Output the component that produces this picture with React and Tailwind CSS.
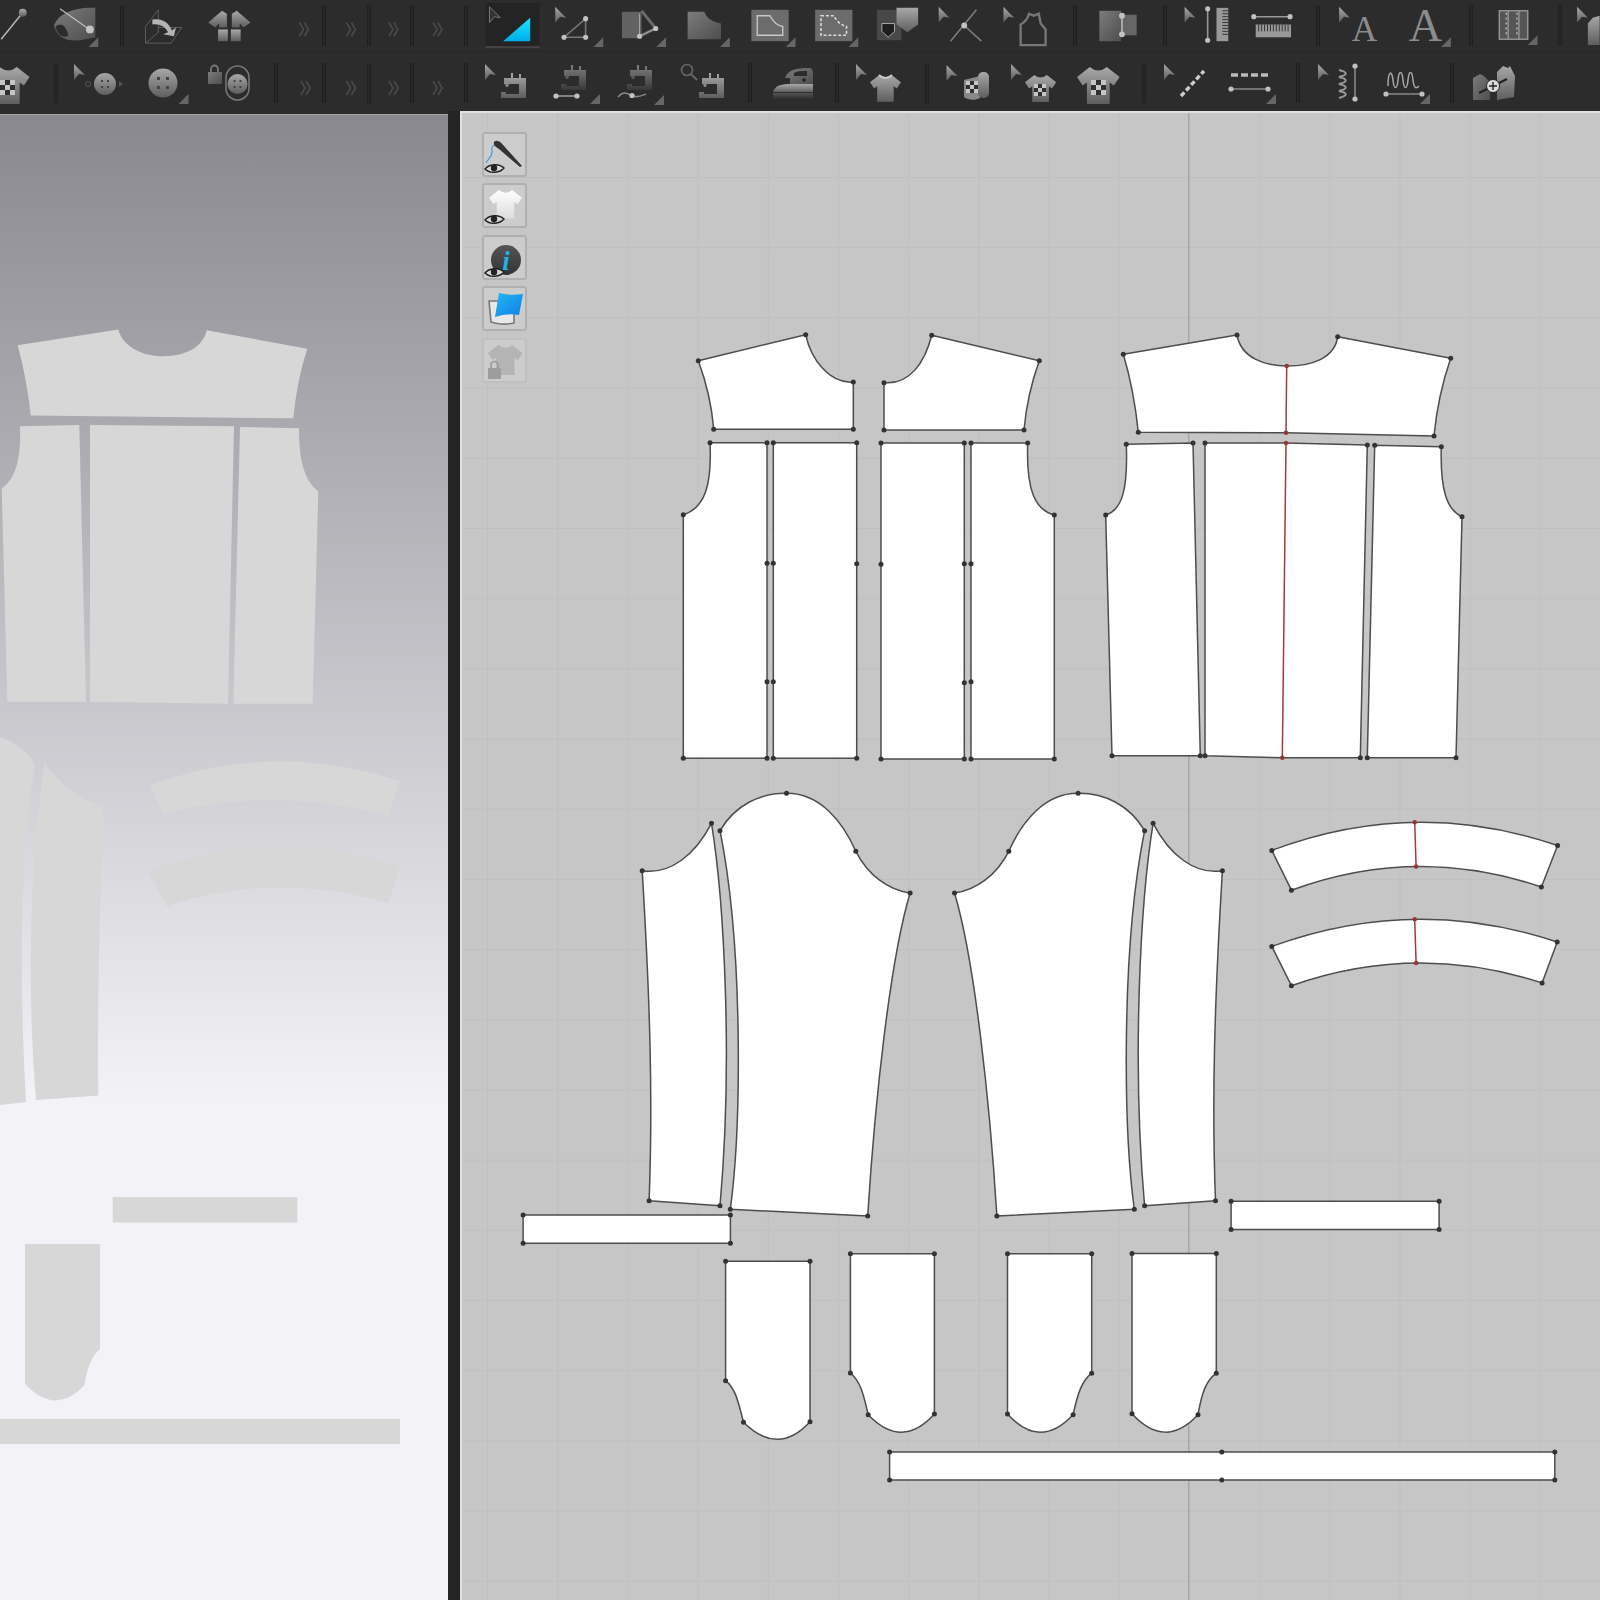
import React from 'react';

// Shared toolbar bits, all drawn in page coordinates so the viewBox of each group lines up
const Arrow = ({ x, y, outline }) => (
  <polygon
    points={`${x - 5},${y - 8} ${x + 6},${y + 3} ${x},${y + 2} ${x - 5},${y + 8}`}
    fill={outline ? '#333' : 'url(#metal)'}
    stroke={outline ? '#777' : 'none'}
  />
);
const Corner = ({ x, y }) => <polygon points={`${x + 5},${y - 5} ${x + 5},${y + 5} ${x - 5},${y + 5}`} fill="#666" />;
const Node = ({ x, y, r = 2.6 }) => <circle cx={x} cy={y} r={r} fill="#c2c2c2" />;
const Chevrons = ({ x, y }) => (
  <path d={`M${x - 5} ${y - 7}L${x - 1} ${y}L${x - 5} ${y + 7}M${x} ${y - 7}L${x + 4} ${y}L${x} ${y + 7}`} fill="none" stroke="#484848" strokeWidth="1.8" />
);
const Machine = ({ x, y, fill = 'url(#metal)' }) => (
  <path transform={`translate(${x} ${y})`} fill={fill} d="M3 6H10V1H12V6H18V2H20V6H25V26H0V20H5V22H18V12H8L7 15H5L4 12H3Z" />
);
const Shirt = ({ x, y, s = 1, fill = 'url(#metal)' }) => (
  <path transform={`translate(${x} ${y}) scale(${s})`} fill={fill} d="M9 0Q15 5 21 0L30 7L26 13L23 11V26H7V11L4 13L0 7Z" />
);
const Checks = ({ x, y, c = 4 }) => (
  <g>
    {[0, 1, 2].map((row) =>
      [0, 1, 2].map((col) => (
        <rect key={`${row}-${col}`} x={x + col * c} y={y + row * c} width={c} height={c} fill={(row + col) % 2 ? '#303030' : '#c6c6c6'} />
      ))
    )}
  </g>
);

const Group = ({ className, box, children }) => (
  <svg className={`shrink-0 h-full ${className}`} viewBox={box}>
    {children}
  </svg>
);
const SepTop = () => <div className="shrink-0 w-[4px] h-[41px] mt-[5px] border-x border-[#1f1f1f] bg-[#272727]" />;
const SepBottom = () => <div className="shrink-0 w-[4px] h-[40px] mt-[11px] border-x border-[#1f1f1f] bg-[#272727]" />;

const TopRow = () => (
  <div className="flex h-[52px] border-b border-[#262626]">
    <Group className="w-[120px]" box="0 0 120 52">
      <line x1="0" y1="40" x2="21" y2="14" stroke="#bbb" strokeWidth="1.4" />
      <circle cx="22" cy="13" r="4" fill="url(#metal)" />
      <path d="M54 26C58 14 74 7 96 8L96 38C78 42 60 46 54 26Z" fill="url(#metalDark)" />
      <path d="M55 27C57 38 66 40 69 36C66 26 62 22 55 27Z" fill="#2c2c2c" stroke="#666" strokeWidth="0.8" />
      <line x1="60" y1="9" x2="90" y2="30" stroke="#bbb" strokeWidth="1.3" />
      <circle cx="90.5" cy="30" r="4" fill="#c4c4c4" />
      <Corner x={94} y={43} />
    </Group>
    <SepTop />
    <Group className="w-[198px]" box="124 0 198 52">
      <path d="M144 27L157 10V33L144 44H170L181 28H157M144 27V44" fill="none" stroke="#5e5e5e" strokeWidth="1" />
      <path d="M151 20C162 18 168 24 171 31L175 28L173 37L162 35L167 33C164 27 158 24 151 25Z" fill="#b4b4b4" />
      <path d="M222 11L208 23L215 28L219 24V28H227V14Z" fill="url(#metal)" />
      <path d="M237 11L251 23L244 28L240 24V28H232V14Z" fill="url(#metal)" />
      <rect x="218" y="30" width="10" height="12" fill="url(#metal)" />
      <rect x="231" y="30" width="10" height="12" fill="url(#metal)" />
      <Chevrons x={306} y={30} />
    </Group>
    <SepTop />
    <Group className="w-[41px]" box="326 0 41 52"><Chevrons x={351.5} y={30} /></Group>
    <SepTop />
    <Group className="w-[39px]" box="371 0 39 52"><Chevrons x={394} y={30} /></Group>
    <SepTop />
    <Group className="w-[50px]" box="414 0 50 52"><Chevrons x={438} y={30} /></Group>
    <SepTop />
    <Group className="w-[605px]" box="468 0 605 52">
      {/* active tool */}
      <rect x="480" y="3" width="55" height="45" fill="#242424" />
      <rect x="480" y="47" width="55" height="2" fill="#444" />
      <Arrow x={489} y={15} outline />
      <defs>
        <linearGradient id="cyan" x1="0" y1="0" x2="0" y2="1">
          <stop offset="0" stopColor="#1fe3ff" />
          <stop offset="1" stopColor="#00aee8" />
        </linearGradient>
      </defs>
      <polygon points="525.5,18 525.5,42 498,42" fill="url(#cyan)" />

      <Arrow x={556} y={15} />
      <path d="M560 38H582V19Z" fill="none" stroke="#777" strokeWidth="1.6" />
      <Node x={560} y={38} />
      <Node x={582} y={38} />
      <Node x={582} y={19} />
      <Corner x={595} y={43} />

      <rect x="619" y="12" width="20" height="27" fill="#626262" />
      <path d="M637 37L653.5 29L639 11" fill="none" stroke="#6a6a6a" strokeWidth="3" />
      <path d="M637 37V14M637 37L653.5 29" fill="none" stroke="#aaa" strokeWidth="1" />
      <Node x={637} y={37} />
      <Node x={653.5} y={29} />
      <Corner x={659} y={43} />

      <path d="M686 12H703C706 20 712 22 720 24V40H686Z" fill="url(#metalDark)" />
      <Corner x={724} y={43} />

      <rect x="751" y="10" width="38" height="32" fill="#6c6c6c" />
      <path d="M757 16H770C773 22 778 26 783 27V36H757Z" fill="none" stroke="#c8c8c8" strokeWidth="1.4" />
      <Corner x={791} y={43} />

      <rect x="816" y="10" width="38" height="32" fill="#6c6c6c" />
      <path d="M822 16H835C838 22 843 26 848 27V36H822Z" fill="none" stroke="#ddd" strokeWidth="1.6" strokeDasharray="3 2" />
      <Corner x={855} y={43} />

      <rect x="879" y="10" width="25" height="31" fill="#484848" />
      <path d="M884 24H897V32L890.5 38L884 32Z" fill="#1e1e1e" stroke="#aaa" strokeWidth="1" />
      <path d="M899 8H921V25L910 33L899 25Z" fill="url(#metal)" />

      <Arrow x={947} y={15} />
      <path d="M980.5 10L954 42M968 26L985.5 42" stroke="#7c7c7c" strokeWidth="1.6" fill="none" />
      <Node x={968} y={26} r={3} />

      <Arrow x={1013} y={15} />
      <path d="M1025.5 46V25C1031 22 1033 18 1034 14L1039 16L1044 14L1046 24L1051 30V46Z" fill="none" stroke="#777" strokeWidth="2.4" />
    </Group>
    <SepTop />
    <Group className="w-[86px]" box="1077 0 86 52">
      <rect x="1121" y="15" width="16" height="21" fill="#666" />
      <rect x="1099" y="11" width="22" height="31" fill="url(#metalDark)" />
      <line x1="1122" y1="16" x2="1122" y2="35" stroke="#bbb" strokeWidth="1.6" />
      <Node x={1122} y={16} r={3} />
      <Node x={1122} y={35} r={3} />
    </Group>
    <SepTop />
    <Group className="w-[149px]" box="1167 0 149 52">
      <Arrow x={1188.5} y={15} />
      <line x1="1207" y1="9" x2="1207" y2="41" stroke="#999" strokeWidth="1.6" />
      <Node x={1207} y={9} />
      <Node x={1207} y={41} />
      <rect x="1216" y="8" width="12" height="34" fill="#999" />
      <path d="M1222 11H1228M1222 14H1228M1222 17H1228M1222 20H1228M1222 23H1228M1222 26H1228M1222 29H1228M1222 32H1228M1222 35H1228" stroke="#333" strokeWidth="1" />
      <line x1="1254" y1="17" x2="1291" y2="17" stroke="#999" strokeWidth="1.6" />
      <Node x={1254} y={17} />
      <Node x={1291} y={17} />
      <rect x="1256" y="25" width="36" height="13" fill="#999" />
      <path d="M1259 25V32M1262 25V32M1265 25V32M1268 25V32M1271 25V32M1274 25V32M1277 25V32M1280 25V32M1283 25V32M1286 25V32M1289 25V32" stroke="#333" strokeWidth="1" />
    </Group>
    <SepTop />
    <Group className="w-[149px]" box="1320 0 149 52">
      <Arrow x={1343} y={15} />
      <text x="1364" y="42" textAnchor="middle" fontSize="36" fill="#8c8c8c" className="font-['Liberation_Serif',serif]">A</text>
      <text x="1426" y="42" textAnchor="middle" fontSize="47" fill="#8c8c8c" className="font-['Liberation_Serif',serif]">A</text>
      <Corner x={1447} y={43} />
    </Group>
    <SepTop />
    <Group className="w-[85px]" box="1473 0 85 52">
      <rect x="1499" y="11" width="29" height="29" fill="#555" stroke="#999" strokeWidth="1.4" />
      <path d="M1508 11V40M1519 11V40" stroke="#999" strokeWidth="1.4" />
      <path d="M1506 13V38M1517 13V38" stroke="#ccc" strokeWidth="1.2" strokeDasharray="2 3" />
      <Corner x={1533} y={41} />
    </Group>
    <SepTop />
    <Group className="w-[38px]" box="1562 0 38 52">
      <Arrow x={1582} y={15} />
      <path d="M1588 46V24L1593 18L1600 16V46Z" fill="url(#metal)" />
    </Group>
  </div>
);

const BottomRow = () => (
  <div className="flex h-[59px]">
    <Group className="w-[54px]" box="0 52 54 59">
      <Shirt x={-13} y={67} s={1.42} />
      <Checks x={0} y={80} c={5} />
    </Group>
    <SepBottom />
    <Group className="w-[216px]" box="58 52 216 59">
      <Arrow x={79} y={72} />
      <circle cx="88" cy="84" r="2.5" fill="none" stroke="#555" />
      <path d="M119 81L123 84L119 87Z" fill="#555" />
      <circle cx="105" cy="84" r="11" fill="url(#metal)" />
      <path d="M101 80h2v2h-2zM107 80h2v2h-2zM101 86h2v2h-2zM107 86h2v2h-2z" fill="#444" />
      <circle cx="163" cy="83" r="14.5" fill="url(#metal)" />
      <path d="M157 77h3v3h-3zM166 77h3v3h-3zM157 86h3v3h-3zM166 86h3v3h-3z" fill="#444" />
      <Corner x={183.5} y={99} />
      <path d="M211 72V69a3.5 3.5 0 0 1 7 0V72" fill="none" stroke="#777" strokeWidth="1.8" />
      <rect x="208" y="72" width="14" height="12" fill="url(#metalDark)" />
      <rect x="226" y="66" width="23" height="34" rx="11.5" fill="none" stroke="#777" strokeWidth="1.6" />
      <circle cx="237.5" cy="84" r="10" fill="url(#metal)" />
      <path d="M233.5 80h2v2h-2zM239.5 80h2v2h-2zM233.5 86h2v2h-2zM239.5 86h2v2h-2z" fill="#444" />
    </Group>
    <SepBottom />
    <Group className="w-[44px]" box="278 52 44 59"><Chevrons x={306} y={88} /></Group>
    <SepBottom />
    <Group className="w-[41px]" box="326 52 41 59"><Chevrons x={351.5} y={88} /></Group>
    <SepBottom />
    <Group className="w-[39px]" box="371 52 39 59"><Chevrons x={394} y={88} /></Group>
    <SepBottom />
    <Group className="w-[50px]" box="414 52 50 59"><Chevrons x={438} y={88} /></Group>
    <SepBottom />
    <Group className="w-[280px]" box="468 52 280 59">
      <Arrow x={490} y={72} />
      <Machine x={501} y={72} />
      <Machine x={561} y={64} fill="url(#fade)" />
      <line x1="556" y1="96" x2="577" y2="96" stroke="#aaa" strokeWidth="1.4" />
      <Node x={556} y={96} />
      <Node x={577} y={96} />
      <Corner x={595} y={99} />
      <Machine x={627} y={64} fill="url(#fade)" />
      <path d="M618 97C624 90 628 94 633 96C638 98 641 96 646 94" fill="none" stroke="#888" strokeWidth="1.6" />
      <Node x={632} y={95.5} />
      <Corner x={659} y={100} />
      <circle cx="687" cy="70" r="5.5" fill="none" stroke="#666" strokeWidth="1.6" />
      <line x1="691" y1="74" x2="697" y2="80" stroke="#666" strokeWidth="2" />
      <Machine x={699} y={72} />
    </Group>
    <SepBottom />
    <Group className="w-[83px]" box="752 52 83 59">
      <path d="M785 78C788 70 795 68 810 68C812 68 813 70 813 74V84H790V78Z" fill="url(#metalDark)" />
      <path d="M794 73C797 71 802 71 807 71V76H794Z" fill="#2c2c2c" />
      <circle cx="804" cy="80" r="1.8" fill="#222" />
      <path d="M773 92C775 86 780 84 790 84H813V92Z" fill="url(#metal)" />
      <rect x="773" y="93" width="40" height="6" fill="url(#fadeOut)" />
    </Group>
    <SepBottom />
    <Group className="w-[86px]" box="839 52 86 59">
      <Arrow x={861} y={72} />
      <Shirt x={870} y={75} s={1.03} />
      <path d="M879 75Q885.5 81 892 75" fill="none" stroke="#ccc" strokeWidth="1.8" />
    </Group>
    <SepBottom />
    <Group className="w-[213px]" box="929 52 213 59">
      <Arrow x={951.5} y={73} />
      <path d="M964 80L980 76V98C974 101 968 100 964 97Z" fill="#888" />
      <Checks x={966} y={81} c={4} />
      <rect x="978" y="72" width="11" height="26" rx="5" fill="url(#metal)" />
      <Arrow x={1016} y={72} />
      <Shirt x={1025} y={75} s={1.04} />
      <Checks x={1034} y={84} c={4} />
      <Shirt x={1077} y={67} s={1.42} />
      <Checks x={1091} y={80} c={5} />
    </Group>
    <SepBottom />
    <Group className="w-[150px]" box="1146 52 150 59">
      <Arrow x={1169} y={72} />
      <line x1="1181" y1="96" x2="1204" y2="71" stroke="#ccc" strokeWidth="3.4" strokeDasharray="5 2.5" />
      <path d="M1231 75H1269" stroke="#bbb" strokeWidth="3.4" strokeDasharray="7 3" />
      <line x1="1231" y1="89" x2="1268" y2="89" stroke="#888" strokeWidth="1.4" />
      <Node x={1231} y={89} />
      <Node x={1268} y={89} />
      <Corner x={1271} y={99} />
    </Group>
    <SepBottom />
    <Group className="w-[150px]" box="1300 52 150 59">
      <Arrow x={1323} y={72} />
      <path d="M1339 70C1348 72 1348 75 1339 77C1348 79 1348 82 1339 84C1348 86 1348 89 1339 91C1348 93 1348 95 1339 98" fill="none" stroke="#999" strokeWidth="2" />
      <line x1="1355" y1="66" x2="1355" y2="99" stroke="#888" strokeWidth="1.6" />
      <Node x={1355} y={66} />
      <Node x={1355} y={99} />
      <path d="M1388 86C1388 70 1392 70 1393 80C1394 90 1397 90 1398 80C1399 70 1402 70 1403 80C1404 90 1407 90 1408 80C1409 70 1412 70 1413 80C1414 90 1417 88 1419 86" fill="none" stroke="#a8a8a8" strokeWidth="1.5" />
      <line x1="1386" y1="94" x2="1422" y2="94" stroke="#888" strokeWidth="1.4" />
      <Node x={1386} y={94} />
      <Node x={1422} y={94} />
      <Corner x={1425} y={99} />
    </Group>
    <SepBottom />
    <Group className="w-[146px]" box="1454 52 146 59">
      <path d="M1473 78L1480 74L1484 76L1490 82V100H1473Z" fill="url(#metalDark)" />
      <path d="M1497 72L1503 66L1508 68L1510 66L1515 76L1514 97L1497 100Z" fill="url(#metal)" />
      <line x1="1479" y1="93" x2="1507" y2="79" stroke="#222" strokeWidth="2" />
      <circle cx="1493" cy="86" r="6.5" fill="#ddd" stroke="#222" />
      <path d="M1493 82V90M1489 86H1497" stroke="#222" strokeWidth="1.4" />
    </Group>
  </div>
);

// Pieces shown in the 3D view, flat grey over the gradient
const Preview = () => (
  <svg className="w-full h-full" viewBox="0 115 448 1485">
    <g fill="#d7d7d8">
      <path d="M17.7 345.2L118.3 329.4C122 345 140 356 163.3 356.2C186 356 203 347 206.7 330.2L307.3 348.7Q297 380 293.3 418.3L30.7 415.5Q27 380 17.7 345.2Z" />
      <path d="M20 426.2L79.3 425L86 701.7L7.3 701.7L1.7 488.3C17 478 21 455 20 426.2Z" />
      <path d="M90 425L234 426.2L228 703.7L90 701.7Z" />
      <path d="M240 427L299 428.2C299 460 304 480 318.3 491.4L312.7 703.7L233.3 703.7Z" />
      <path d="M0 737C14 742 28 750 35 765C22 840 18 960 26 1102L0 1105Z" />
      <path d="M44.3 762.6C55 780 80 800 103.3 806.8C100 900 97 1000 98.3 1095.5L36 1100C28 1000 28 880 44.3 762.6Z" />
      <path d="M150 785Q275 740 400 781.2L388.3 816Q273 785 163.3 813.8Z" />
      <path d="M148.3 870.6Q275 825 400 866L388.3 903.2Q273 870 166.7 906Z" />
      <rect x="112.7" y="1197" width="184.6" height="25.5" />
      <path d="M25 1244H100V1349C92 1355 87 1368 84.3 1385.5Q55 1416 25 1384Z" />
      <rect x="0" y="1419" width="400" height="25" />
    </g>
  </svg>
);

const Piece = ({ d, pts }) => (
  <g>
    <path d={d} fill="#fff" stroke="#4d4d4d" strokeWidth="1.5" strokeLinejoin="round" />
    {pts.map(([x, y]) => (
      <circle key={`${x}-${y}`} cx={x} cy={y} r="2.5" fill="#333" />
    ))}
  </g>
);

const Seam = ({ x1, y1, x2, y2 }) => (
  <g>
    <line x1={x1} y1={y1} x2={x2} y2={y2} stroke="#a03c3c" strokeWidth="1.5" />
    <circle cx={x1} cy={y1} r="2.2" fill="#963434" />
    <circle cx={x2} cy={y2} r="2.2" fill="#963434" />
  </g>
);

const Sleeve = () => (
  <g>
    <Piece
      d="M642.2 870.7C670 875 695 855 711.5 823.3C724 900 733 1060 720 1205.7L649.1 1200.7C653 1100 650 1000 642.2 870.7Z"
      pts={[[642.2, 870.7], [711.5, 823.3], [720, 1205.7], [649.1, 1200.7]]}
    />
    <Piece
      d="M720 830.7C735 805 760 793 786.5 793.3C820 793 843 822 855.8 851.3C868 875 888 890 910.1 893C890 960 875 1100 867.7 1216L730.3 1209.3C741 1130 744 950 720 830.7Z"
      pts={[[720, 830.7], [786.5, 793.3], [855.8, 851.3], [910.1, 893], [867.7, 1216], [730.3, 1209.3]]}
    />
  </g>
);

const Pattern = () => (
  <svg className="w-[1138px] h-[1487px]" viewBox="462 113 1138 1487">
    <line x1="1188.8" y1="113" x2="1188.8" y2="1600" stroke="#9a9a9a" strokeWidth="1" />

    {/* front yokes and panels */}
    <Piece d="M698.3 360.7L805.7 334.7C811 360 830 384 853.3 382V429.3H713.7Q711 395 698.3 360.7Z" pts={[[698.3, 360.7], [805.7, 334.7], [853.3, 382], [853.3, 429.3], [713.7, 429.3]]} />
    <Piece d="M931.7 335.3L1039.3 360.7Q1027 395 1024 430H884V382.7C910 385 925 362 931.7 335.3Z" pts={[[931.7, 335.3], [1039.3, 360.7], [1024, 430], [884, 430], [884, 382.7]]} />
    <Piece d="M710 442.7H767V758.3H683.3V514.7C705 508 712 485 710 442.7Z" pts={[[710, 442.7], [767, 442.7], [767, 563.3], [767, 681.7], [767, 758.3], [683.3, 758.3], [683.3, 514.7]]} />
    <Piece d="M773.3 442.7H856.7V758.3H773.3Z" pts={[[773.3, 442.7], [856.7, 442.7], [856.7, 563.7], [856.7, 758.3], [773.3, 758.3], [773.3, 563.3], [773.3, 681.7]]} />
    <Piece d="M881 443H964.3V759H881Z" pts={[[881, 443], [964.3, 443], [964.3, 563.7], [964.3, 682.7], [964.3, 759], [881, 759], [881, 564.3]]} />
    <Piece d="M971 443H1027.7C1026 490 1035 510 1054.3 515V759H971Z" pts={[[971, 443], [1027.7, 443], [1054.3, 515], [1054.3, 759], [971, 759], [971, 563.7], [971, 681.7]]} />

    {/* back */}
    <Piece
      d="M1123.3 354.3L1237 335C1241 358 1265 366 1287 366C1312 366 1335 358 1337.7 336.7L1450.7 358.3Q1438 395 1434 436L1286 432.7L1138.3 432.3Q1134 390 1123.3 354.3Z"
      pts={[[1123.3, 354.3], [1237, 335], [1337.7, 336.7], [1450.7, 358.3], [1434, 436], [1138.3, 432.3]]}
    />
    <Seam x1={1286.7} y1={366} x2={1286} y2={432.7} />
    <Piece d="M1126.3 444.3L1193 443L1200.3 755.7H1112L1105.7 515C1122 510 1128 490 1126.3 444.3Z" pts={[[1126.3, 444.3], [1193, 443], [1200.3, 755.7], [1112, 755.7], [1105.7, 515]]} />
    <Piece d="M1205 443H1286L1367.3 445L1360.3 757.7H1282.3L1205 755.7Z" pts={[[1205, 443], [1367.3, 445], [1360.3, 757.7], [1205, 755.7]]} />
    <Seam x1={1286} y1={443} x2={1282.3} y2={757.7} />
    <Piece d="M1374.7 445.3L1441.3 446.7C1440 490 1447 510 1462 516.7L1456 757.7H1367.3Z" pts={[[1374.7, 445.3], [1441.3, 446.7], [1462, 516.7], [1456, 757.7], [1367.3, 757.7]]} />

    {/* sleeves */}
    <Sleeve />
    <g transform="translate(1864.6 0) scale(-1 1)">
      <Sleeve />
    </g>

    {/* collars */}
    <Piece d="M1271.8 850.4Q1414.7 796.6 1557.6 845.5L1541.4 887Q1416 844.4 1291.4 890.2Z" pts={[[1271.8, 850.4], [1557.6, 845.5], [1541.4, 887], [1291.4, 890.2]]} />
    <Seam x1={1414.7} y1={822.3} x2={1416.1} y2={866.5} />
    <Piece d="M1271.8 946.4Q1414.7 894.2 1557.2 942L1542.1 983Q1416 941.7 1291.4 985.7Z" pts={[[1271.8, 946.4], [1557.2, 942], [1542.1, 983], [1291.4, 985.7]]} />
    <Seam x1={1414.7} y1={919.2} x2={1416.1} y2={963} />

    {/* bands */}
    <Piece d="M523.1 1215H730.4V1243.3H523.1Z" pts={[[523.1, 1215], [730.4, 1215], [730.4, 1243.3], [523.1, 1243.3]]} />
    <Piece d="M1231.1 1201.3H1439.1V1229.5H1231.1Z" pts={[[1231.1, 1201.3], [1439.1, 1201.3], [1439.1, 1229.5], [1231.1, 1229.5]]} />
    <Piece d="M889.6 1452H1554.8V1480H889.6Z" pts={[[889.6, 1452], [1221.8, 1452], [1554.8, 1452], [1554.8, 1480], [1221.8, 1480], [889.6, 1480]]} />

    {/* cuffs */}
    <Piece d="M725.6 1261.3H810V1421.7Q778 1456.6 743.5 1422.3C738 1400 735 1388 725.6 1380.7Z" pts={[[725.6, 1261.3], [810, 1261.3], [810, 1421.7], [743.5, 1422.3], [725.6, 1380.7]]} />
    <Piece d="M850.4 1253.7H934.4V1414Q902 1450 868.2 1414.7C863 1392 860 1381 850.4 1373Z" pts={[[850.4, 1253.7], [934.4, 1253.7], [934.4, 1414], [868.2, 1414.7], [850.4, 1373]]} />
    <Piece d="M1007.5 1253.7H1091.7V1373.2C1082 1381 1078 1392 1073.1 1414.7Q1040 1450 1007.5 1414Z" pts={[[1007.5, 1253.7], [1091.7, 1253.7], [1091.7, 1373.2], [1073.1, 1414.7], [1007.5, 1414]]} />
    <Piece d="M1132 1253.6H1216.3V1373.2C1206 1381 1202 1392 1198 1414.7Q1165 1450 1132 1413.8Z" pts={[[1132, 1253.6], [1216.3, 1253.6], [1216.3, 1373.2], [1198, 1414.7], [1132, 1413.8]]} />
  </svg>
);

const Eye = ({ x, y }) => (
  <g transform={`translate(${x} ${y})`}>
    <path d="M0 6C4 1 14 0 19 5C15 10 5 11 0 6Z" fill="#d8d8d8" stroke="#222" strokeWidth="1.4" />
    <circle cx="9" cy="5" r="3.2" fill="#222" />
  </g>
);

const ToolButton = ({ dim, children }) => (
  <div className={`w-[45px] h-[45px] rounded-[3px] border-2 bg-[#cccccc] ${dim ? 'border-[#c0c0c0]' : 'border-[#b0b0b0]'}`}>
    <svg className="w-full h-full" viewBox="2 2 41 41">{children}</svg>
  </div>
);

const SideTools = () => (
  <div className="absolute left-[20px] top-[19px] flex flex-col gap-[6.4px]">
    <ToolButton>
      <path d="M14 12C11 13 9 16 10 20C10 25 6 27 4 31" fill="none" stroke="#3aa0e8" strokeWidth="1.2" />
      <path d="M12 10C15 7 19 10 22 14L40 34L38 35L17 17C14 15 11 13 12 10Z" fill="#333" />
      <Eye x={3} y={31} />
    </ToolButton>
    <ToolButton>
      <Shirt x={7} y={7} s={1.1} fill="url(#paper)" />
      <Eye x={3} y={31} />
    </ToolButton>
    <ToolButton>
      <circle cx="24" cy="25" r="15" fill="url(#ball)" />
      <text x="24" y="35" textAnchor="middle" fontSize="27" fontWeight="700" fontStyle="italic" fill="#1cb4e8" className="font-['Liberation_Serif',serif]">i</text>
      <Eye x={3} y={32} />
    </ToolButton>
    <ToolButton>
      <path d="M7 15H32V37C24 39 14 38 9 36Z" fill="#e8e8e8" stroke="#777" strokeWidth="1.6" />
      <path d="M17 7Q29 10 41 8L37 29Q25 27 13 31Z" fill="url(#blue)" />
    </ToolButton>
    <ToolButton dim>
      <Shirt x={6} y={7} s={1.15} fill="#b4b4b4" />
      <path d="M9 30V27a3.5 3.5 0 0 1 7 0V30" fill="none" stroke="#999" strokeWidth="1.6" />
      <rect x="6" y="30" width="13" height="11" fill="#9d9d9d" />
    </ToolButton>
  </div>
);

const Defs = () => (
  <svg className="absolute w-0 h-0">
    <defs>
      <linearGradient id="metal" x1="0" y1="0" x2="0" y2="1">
        <stop offset="0" stopColor="#a8a8a8" />
        <stop offset="1" stopColor="#5e5e5e" />
      </linearGradient>
      <linearGradient id="metalDark" x1="0" y1="0" x2="1" y2="1">
        <stop offset="0" stopColor="#7c7c7c" />
        <stop offset="1" stopColor="#4e4e4e" />
      </linearGradient>
      <linearGradient id="fade" x1="0" y1="0" x2="0" y2="1">
        <stop offset="0" stopColor="#808080" />
        <stop offset="1" stopColor="#383838" />
      </linearGradient>
      <linearGradient id="fadeOut" x1="0" y1="0" x2="0" y2="1">
        <stop offset="0" stopColor="#555" />
        <stop offset="1" stopColor="#2c2c2c" />
      </linearGradient>
      <linearGradient id="paper" x1="0" y1="0" x2="0" y2="1">
        <stop offset="0" stopColor="#fff" />
        <stop offset="1" stopColor="#dcdcdc" />
      </linearGradient>
      <linearGradient id="ball" x1="0" y1="0" x2="0" y2="1">
        <stop offset="0" stopColor="#555" />
        <stop offset="1" stopColor="#333" />
      </linearGradient>
      <linearGradient id="blue" x1="0" y1="0" x2="1" y2="1">
        <stop offset="0" stopColor="#22b6f5" />
        <stop offset="1" stopColor="#0f7fe6" />
      </linearGradient>
    </defs>
  </svg>
);

export default function App() {
  return (
    <div className="w-[1600px] h-[1600px] overflow-hidden flex flex-col bg-[#2c2c2c]">
      <Defs />
      <TopRow />
      <BottomRow />
      <div className="flex flex-1 min-h-0">
        <div className="w-[448px] mt-[3px] border-t border-[#a5a5aa] bg-[linear-gradient(to_bottom,#88888e_0px,#f2f2f7_986px)] bg-[#f2f2f7] bg-no-repeat">
          <Preview />
        </div>
        <div className="w-[12px] bg-[#242424]" />
        <div className="relative flex-1 border-l-2 border-t-2 border-[#e0e0e0] bg-[#c6c6c6] bg-[linear-gradient(to_right,#bfbfbf_1px,transparent_1px),linear-gradient(to_bottom,#bfbfbf_1px,transparent_1px)] bg-[size:70.2px_70.2px] bg-[position:25px_64px]">
          <Pattern />
          <SideTools />
        </div>
      </div>
    </div>
  );
}
